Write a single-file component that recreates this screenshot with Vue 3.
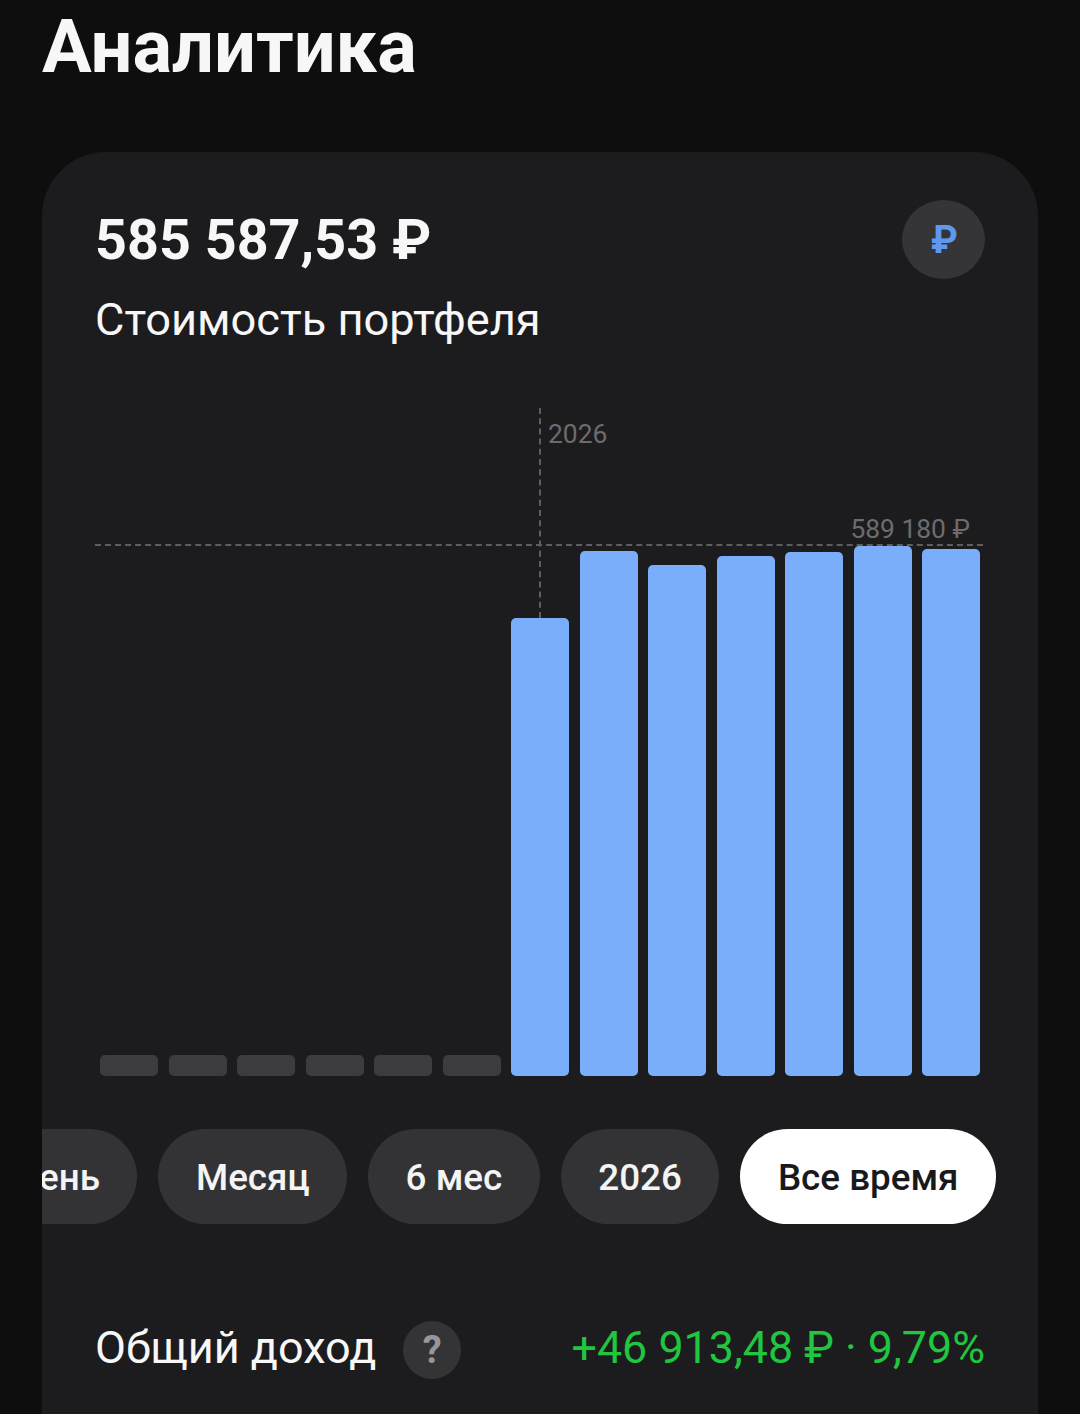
<script setup>
const bars = [
  { h: 21, on: false }, { h: 21, on: false }, { h: 21, on: false },
  { h: 21, on: false }, { h: 21, on: false }, { h: 21, on: false },
  { h: 458, on: true }, { h: 525, on: true }, { h: 511, on: true },
  { h: 520, on: true }, { h: 524, on: true }, { h: 530, on: true }, { h: 527, on: true }
]
const chips = ['День', 'Месяц', '6 мес', '2026', 'Все время']
</script>

<template>
  <div class="page">
    <h1 class="title">Аналитика</h1>
    <section class="card">
      <div class="head">
        <div>
          <div class="amount">585 587,53 ₽</div>
          <div class="sub">Стоимость портфеля</div>
        </div>
        <div class="cur">₽</div>
      </div>
      <div class="chart">
        <div class="vline"></div>
        <div class="hline"></div>
        <span class="year">2026</span>
        <span class="max">589 180 ₽</span>
        <div class="bars">
          <div
            v-for="(b, i) in bars"
            :key="i"
            class="bar"
            :class="{ on: b.on }"
            :style="{ height: b.h + 'px' }"
          ></div>
        </div>
      </div>
      <div class="chips">
        <div v-for="c in chips" :key="c" class="chip" :class="{ active: c === 'Все время' }">{{ c }}</div>
      </div>
      <div class="income">
        <div class="inc-left">
          <span class="inc-label">Общий доход</span>
          <span class="q">?</span>
        </div>
        <span class="inc-val">+46 913,48 ₽ · 9,79%</span>
      </div>
    </section>
  </div>
</template>

<style>
html, body { margin: 0; background: #0e0e0f; }
</style>

<style scoped>
.page {
  width: 1080px;
  height: 1414px;
  overflow: hidden;
  background: #0e0e0f;
  font-family: Roboto, "Noto Sans", sans-serif;
  color: #f7f7f8;
  padding-left: 42px;
  box-sizing: border-box;
}
.title {
  margin: 0;
  height: 152px;
  font-size: 74px;
  line-height: 94px;
  font-weight: 700;
  letter-spacing: 0;
}
.card {
  width: 996px;
  height: 1300px;
  background: #1c1c1e;
  border-radius: 64px 64px 0 0;
  padding-top: 48px;
  box-sizing: border-box;
}
.head {
  display: flex;
  justify-content: space-between;
  padding: 0 53px 0 53px;
}
.amount {
  font-size: 55.7px;
  line-height: 80px;
  font-weight: 700;
}
.sub {
  font-size: 45.2px;
  line-height: 52px;
  margin-top: 14px;
}
.cur {
  width: 83px;
  height: 79px;
  box-sizing: border-box;
  padding-left: 2px;
  border-radius: 50%;
  background: #353537;
  color: #5f99ee;
  font-size: 38px;
  font-weight: 700;
  display: flex;
  align-items: center;
  justify-content: center;
}
.chart {
  position: relative;
  height: 668px;
  margin-top: 62px;
  padding: 0 58px;
  box-sizing: border-box;
  display: flex;
  align-items: flex-end;
}
.bars {
  width: 880px;
  display: flex;
  align-items: flex-end;
  justify-content: space-between;
}
.bar {
  width: 58px;
  border-radius: 5px;
  background: #3c3c3e;
}
.bar.on { background: #7aaefb; }
.vline {
  position: absolute;
  left: 497px;
  top: 0;
  height: 210px;
  border-left: 2px dashed #5e5e60;
}
.hline {
  position: absolute;
  left: 53px;
  width: 888px;
  top: 136px;
  border-top: 2px dashed #5e5e60;
}
.year, .max {
  position: absolute;
  font-size: 26.4px;
  line-height: 30px;
  color: #6c6c6e;
}
.year { left: 506px; top: 11px; }
.max { right: 68px; top: 106px; }
.chips {
  display: flex;
  justify-content: flex-end;
  gap: 21px;
  height: 95px;
  margin-top: 53px;
  padding-right: 42px;
  overflow: hidden;
}
.chip {
  flex: none;
  height: 95px;
  line-height: 97px;
  padding: 0 37.5px;
  border-radius: 48px;
  background: #333335;
  color: #f4f4f5;
  font-size: 36.8px;
  font-weight: 500;
}
.chip.active {
  background: #fff;
  color: #19191b;
}
.income {
  display: flex;
  justify-content: space-between;
  align-items: center;
  margin-top: 95px;
  padding: 0 53px 0 53px;
}
.inc-left {
  display: flex;
  align-items: center;
  gap: 27px;
}
.inc-label { font-size: 45px; line-height: 58px; margin-bottom: 4px; }
.q {
  width: 58px;
  height: 58px;
  border-radius: 50%;
  background: #343436;
  color: #97979b;
  font-size: 38px;
  font-weight: 700;
  display: flex;
  align-items: center;
  justify-content: center;
}
.inc-val {
  font-size: 44.8px;
  line-height: 58px;
  margin-bottom: 4px;
  color: #20c640;
}
</style>
